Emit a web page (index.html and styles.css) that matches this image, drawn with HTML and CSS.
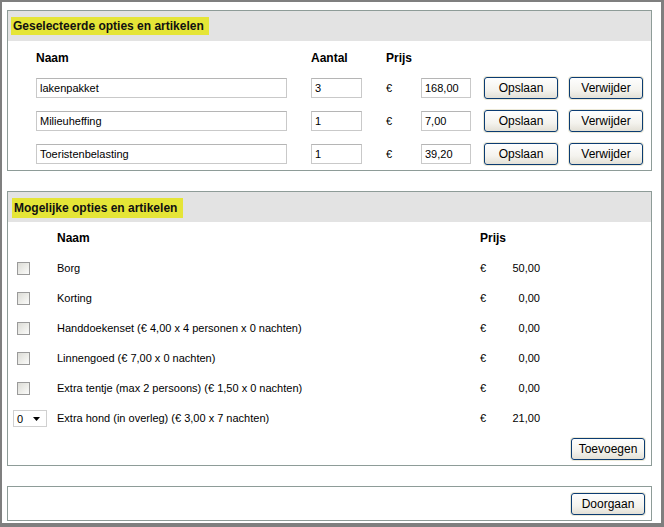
FILE: index.html
```html
<!DOCTYPE html>
<html>
<head>
<meta charset="utf-8">
<link rel="stylesheet" href="styles.css">
</head>
<body>
<div class="frame">
  <section class="box">
    <div class="box-head"><span class="mark">Geselecteerde opties en artikelen</span></div>
    <div class="sel-grid">
      <div class="th">Naam</div>
      <div class="th">Aantal</div>
      <div class="th">Prijs</div>
      <div></div><div></div><div></div>

      <div><span class="field name">lakenpakket</span></div>
      <div><span class="field qty">3</span></div>
      <div class="eur">€</div>
      <div><span class="field price">168,00</span></div>
      <div><button class="btn">Opslaan</button></div>
      <div><button class="btn">Verwijder</button></div>

      <div><span class="field name">Milieuheffing</span></div>
      <div><span class="field qty">1</span></div>
      <div class="eur">€</div>
      <div><span class="field price">7,00</span></div>
      <div><button class="btn">Opslaan</button></div>
      <div><button class="btn">Verwijder</button></div>

      <div><span class="field name">Toeristenbelasting</span></div>
      <div><span class="field qty">1</span></div>
      <div class="eur">€</div>
      <div><span class="field price">39,20</span></div>
      <div><button class="btn">Opslaan</button></div>
      <div><button class="btn">Verwijder</button></div>
    </div>
  </section>

  <section class="box">
    <div class="box-head"><span class="mark mark2">Mogelijke opties en artikelen</span></div>
    <div class="opt-grid">
      <div></div>
      <div class="th">Naam</div>
      <div class="th">Prijs</div>

      <div><span class="check"></span></div>
      <div>Borg</div>
      <div class="money"><span>€</span><span>50,00</span></div>

      <div><span class="check"></span></div>
      <div>Korting</div>
      <div class="money"><span>€</span><span>0,00</span></div>

      <div><span class="check"></span></div>
      <div>Handdoekenset (€ 4,00 x 4 personen x 0 nachten)</div>
      <div class="money"><span>€</span><span>0,00</span></div>

      <div><span class="check"></span></div>
      <div>Linnengoed (€ 7,00 x 0 nachten)</div>
      <div class="money"><span>€</span><span>0,00</span></div>

      <div><span class="check"></span></div>
      <div>Extra tentje (max 2 persoons) (€ 1,50 x 0 nachten)</div>
      <div class="money"><span>€</span><span>0,00</span></div>

      <div><span class="select">0<svg class="caret" width="7" height="4" viewBox="0 0 7 4"><path d="M0 0H7L3.5 4Z" fill="#000"/></svg></span></div>
      <div>Extra hond (in overleg) (€ 3,00 x 7 nachten)</div>
      <div class="money"><span>€</span><span>21,00</span></div>
    </div>
    <div class="actions"><button class="btn">Toevoegen</button></div>
  </section>

  <section class="box footer">
    <button class="btn">Doorgaan</button>
  </section>
</div>
</body>
</html>
```
FILE: styles.css
```css
* { box-sizing: border-box; }
html, body { margin: 0; padding: 0; }
body {
  background: #ffffff;
  font-family: "Liberation Sans", Arial, sans-serif;
  font-size: 11px;
  color: #000;
}
.frame {
  width: 664px;
  height: 527px;
  border-style: solid;
  border-color: #7f7f7f;
  border-width: 2px 3px 4px 2px;
  padding: 8px 9px 0 5px;
  background: #fff;
}
.box {
  border: 1px solid #8e9c98;
  background: #fff;
  margin-bottom: 20px;
}
.box-head {
  background: #e3e3e3;
  height: 30px;
  padding: 6px 0 0 3px;
}
.mark {
  display: inline-block;
  background: #e5e537;
  font-weight: bold;
  font-size: 12px;
  height: 18px;
  line-height: 18px;
  padding: 0 0 0 2px;
  width: 198px;
  color: #111;
  white-space: nowrap;
}
.mark2 { width: 171px; margin-left: 1px; height: 20px; line-height: 20px; }
.th { font-weight: bold; font-size: 12px; }

.sel-grid {
  display: grid;
  grid-template-columns: 275px 75px 35px 63px 85px 74px;
  grid-auto-rows: 22px;
  grid-template-rows: 16px;
  row-gap: 11px;
  align-items: center;
  padding: 9px 0 5px 28px;
}
.sel-grid > div { display: flex; align-items: center; }
.sel-grid > .th { line-height: 16px; }
.sel-grid > div:nth-child(-n+6) { margin-bottom: 1px; }
.field {
  display: block;
  height: 20px;
  line-height: 18px;
  border: 1px solid #c9c9c9;
  border-top-color: #b5b5b5;
  padding: 0 3px;
  background: #fff;
}
.field.name { width: 251px; }
.field.qty { width: 51px; }
.field.price { width: 50px; }

.btn {
  width: 74px;
  height: 22px;
  padding: 0;
  border: 1px solid #0b3c72;
  border-radius: 3px;
  background: linear-gradient(#fefefe 0%, #f4f3ee 60%, #e3e0d6 100%);
  box-shadow: 0 0 0 1px #ece9d8;
  font-family: "Liberation Sans", Arial, sans-serif;
  font-size: 12px;
  color: #000;
}

.opt-grid {
  display: grid;
  grid-template-columns: 44px 423px 60px;
  grid-auto-rows: 30px;
  align-items: center;
  padding: 1px 0 0 5px;
}
.check {
  display: block;
  width: 13px;
  height: 13px;
  margin-left: 4px;
  border: 1px solid #9a9a9a;
  background: linear-gradient(135deg, #dcdcd6 0%, #f2f2ef 70%, #fbfbfb 100%);
}
.select {
  display: flex;
  align-items: center;
  justify-content: space-between;
  width: 34px;
  height: 17px;
  border: 1px solid #d0d0d0;
  padding: 0 6px 0 3px;
  margin-top: 1px;
}
.caret { display: block; margin-top: 1px; }
.money {
  display: flex;
  justify-content: space-between;
}
.opt-grid .th:last-child { padding-left: 1px; }
.actions {
  display: flex;
  justify-content: flex-end;
  padding: 5px 6px 5px 0;
}
.footer {
  display: flex;
  justify-content: flex-end;
  padding: 6px 6px 5px 0;
  margin-bottom: 0;
}
```
